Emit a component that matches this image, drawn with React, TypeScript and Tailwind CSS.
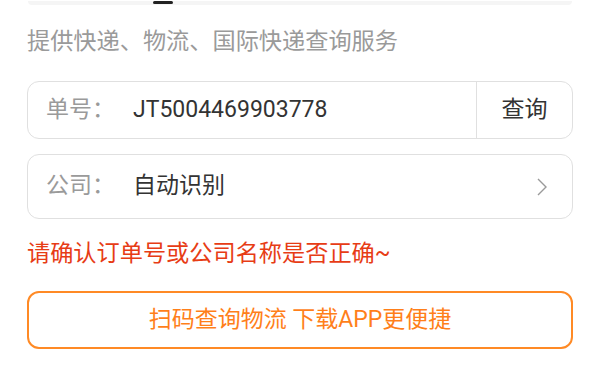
export default function App() {
  return (
    <div
      className="w-[600px] h-[370px] bg-white overflow-hidden"
      style={{ fontFamily: 'Roboto, "Noto Sans CJK SC", sans-serif' }}
    >
      {/* 上方输入框的残留部分 */}
      <div className="mx-[28px] h-[4px] bg-[#f5f5f5] rounded-b-[10px] pl-[125px]">
        <div className="w-[20px] h-[3px] mt-[1px] bg-[#222] rounded-sm" />
      </div>

      <div className="px-[27px]">
        <p className="mt-[20px] text-[23.2px] leading-[32px] text-[#9a9a9a]">
          提供快递、物流、国际快递查询服务
        </p>

        {/* 单号 */}
        <div className="mt-[24px] h-[58px] flex items-stretch border border-[#e0e0e0] rounded-[12px]">
          <div className="flex-1 flex items-center pl-[18px]">
            <span className="w-[87px] text-[23px] text-[#9a9a9a]">单号：</span>
            <span className="text-[23px] text-[#333]">JT5004469903778</span>
          </div>
          <div className="w-[96px] border-l border-[#e0e0e0] flex items-center justify-center text-[23px] text-[#333]">
            查询
          </div>
        </div>

        {/* 公司 */}
        <div className="mt-[15px] h-[65px] flex items-center border border-[#e0e0e0] rounded-[12px] pl-[18px] pr-[24px]">
          <span className="w-[87px] text-[23px] text-[#9a9a9a]">公司：</span>
          <span className="flex-1 text-[23px] text-[#333]">自动识别</span>
          <svg width="12" height="20" viewBox="0 0 12 20" fill="none">
            <polyline points="2,2 10,10 2,18" stroke="#9a9a9a" strokeWidth="1.4" />
          </svg>
        </div>

        <p className="mt-[18px] text-[23.2px] leading-[33px] text-[#e73c15]">
          请确认订单号或公司名称是否正确~
        </p>

        <div className="mt-[21px] h-[58px] flex items-center justify-center border-2 border-[#ff8a25] rounded-[12px] text-[23px] text-[#ff7f1a]">
          扫码查询物流 下载APP更便捷
        </div>
      </div>
    </div>
  );
}
